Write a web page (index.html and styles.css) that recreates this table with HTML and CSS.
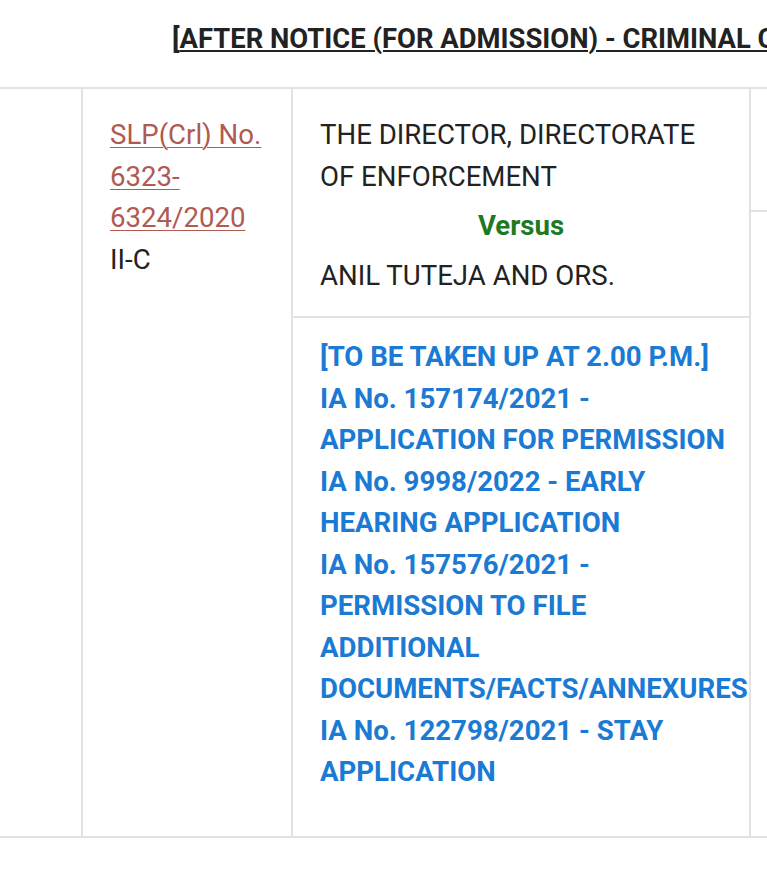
FILE: index.html
```html
<!DOCTYPE html>
<html>
<head>
<meta charset="utf-8">
<link rel="stylesheet" href="styles.css">
</head>
<body>
<div class="page">
  <h2 class="heading">[<u>AFTER NOTICE (FOR ADMISSION) - CRIMINAL CASES</u>]</h2>
  <div class="table">
    <div class="col col-sno"></div>
    <div class="col col-case">
      <div class="cell">
        <a class="case-link" href="#">SLP(Crl) No. 6323-6324/2020</a>
        <div class="section">II-C</div>
      </div>
    </div>
    <div class="col col-party">
      <div class="cell party-cell">
        <div class="party">THE DIRECTOR, DIRECTORATE OF ENFORCEMENT</div>
        <div class="versus">Versus</div>
        <div class="party">ANIL TUTEJA AND ORS.</div>
      </div>
      <div class="cell ia-cell">
        <div class="ia">[TO BE TAKEN UP AT 2.00 P.M.]<br>IA No. 157174/2021 - APPLICATION FOR PERMISSION<br>IA No. 9998/2022 - EARLY HEARING APPLICATION<br>IA No. 157576/2021 - PERMISSION TO FILE ADDITIONAL DOCUMENTS/FACTS/ANNEXURES<br>IA No. 122798/2021 - STAY APPLICATION</div>
      </div>
    </div>
    <div class="col col-adv">
      <div class="cell adv-top"></div>
      <div class="cell adv-rest"></div>
    </div>
  </div>
</div>
</body>
</html>
```

FILE: styles.css
```css
html, body {
  margin: 0;
  padding: 0;
  background: #ffffff;
  overflow: hidden;
}
body {
  width: 767px;
  height: 870px;
  font-family: Roboto, "Liberation Sans", sans-serif;
  color: #222222;
}
.page {
  width: 1100px;
}
.heading {
  margin: 19px 0 0 0;
  padding-left: 172px;
  height: 40px;
  line-height: 40px;
  font-size: 27.4px;
  font-weight: 700;
  color: #222222;
  white-space: nowrap;
}
.heading u {
  text-decoration-thickness: 2px;
  text-underline-offset: 2px;
}
.table {
  margin-top: 28px;
  display: flex;
  border-top: 2px solid #e2e2e2;
  border-bottom: 2px solid #e2e2e2;
  height: 751px;
  box-sizing: border-box;
  font-size: 27.6px;
  line-height: 41.5px;
}
.col {
  display: flex;
  flex-direction: column;
  border-right: 2px solid #e2e2e2;
}
.col-sno {
  width: 81px;
}
.col-case {
  width: 208px;
}
.col-party {
  width: 456px;
}
.col-adv {
  flex: 1;
  border-right: none;
}
.cell {
  padding: 25px 27px 0 27px;
}
.case-link {
  color: #b05a52;
  text-decoration: underline;
  text-decoration-thickness: 1px;
  text-underline-offset: 3px;
}
.section {
  color: #222222;
}
.party-cell {
  height: 229px;
  box-sizing: border-box;
  border-bottom: 2px solid #e2e2e2;
}
.versus {
  text-align: center;
  color: #1f7a1f;
  font-weight: 700;
  line-height: 58px;
  margin: 0;
}
.ia-cell {
  padding-top: 18px;
  padding-right: 0;
  flex: 1;
}
.ia {
  color: #1a7ad4;
  font-weight: 700;
}
.adv-top {
  height: 123px;
  box-sizing: border-box;
  border-bottom: 2px solid #e2e2e2;
}
.adv-rest {
  flex: 1;
}
```
